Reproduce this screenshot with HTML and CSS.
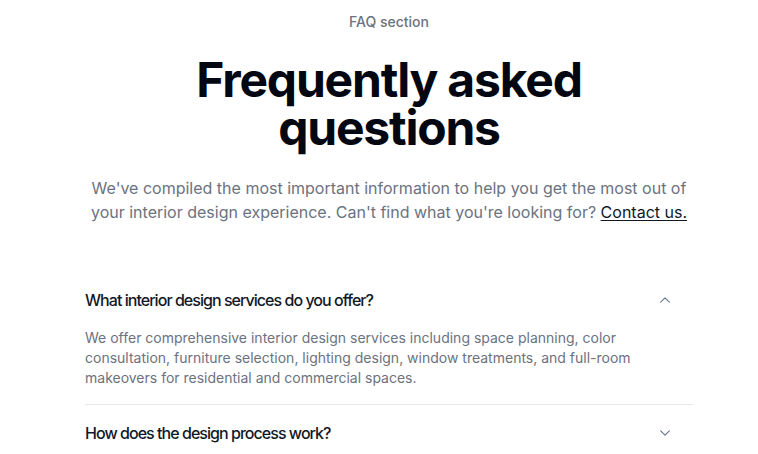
FILE: index.html
```html
<!DOCTYPE html>
<html lang="en">
<head>
<meta charset="utf-8">
<title>FAQ</title>
<link rel="stylesheet" href="styles.css">
</head>
<body>
<main class="page">
  <section class="faq">
    <header class="intro">
      <p class="eyebrow">FAQ section</p>
      <h1 class="title">Frequently asked questions</h1>
      <p class="lead">We've compiled the most important information to help you get the most out of your interior design experience. Can't find what you're looking for? <a class="link" href="#">Contact us.</a></p>
    </header>
    <dl class="list">
      <div class="item">
        <dt class="question">
          <span class="q-text">What interior design services do you offer?</span>
          <svg class="chev" viewBox="0 0 24 24" fill="none" stroke="currentColor" stroke-width="1.8" stroke-linecap="round" stroke-linejoin="round"><path d="M4.5 15.75l7.5-7.5 7.5 7.5"/></svg>
        </dt>
        <dd class="answer">We offer comprehensive interior design services including space planning, color consultation, furniture selection, lighting design, window treatments, and full-room makeovers for residential and commercial spaces.</dd>
      </div>
      <div class="item">
        <dt class="question">
          <span class="q-text">How does the design process work?</span>
          <svg class="chev" viewBox="0 0 24 24" fill="none" stroke="currentColor" stroke-width="1.8" stroke-linecap="round" stroke-linejoin="round"><path d="M19.5 8.25l-7.5 7.5-7.5-7.5"/></svg>
        </dt>
      </div>
    </dl>
  </section>
</main>
</body>
</html>
```
FILE: styles.css
```css
* { box-sizing: border-box; }
html, body { margin: 0; padding: 0; background: #ffffff; }
body {
  font-family: Inter, "Noto Sans", sans-serif;
  color: #111827;
  overflow: hidden;
}
.page {
  padding: 12px 0 0 20px;
}
.faq {
  max-width: 608px;
  margin: 0 auto;
}
.intro { text-align: center; }
.eyebrow {
  margin: 0;
  font-size: 14px;
  line-height: 20px;
  font-weight: 500;
  color: #6b7280;
}
.title {
  margin: 24px 0 0;
  font-size: 48px;
  line-height: 48px;
  font-weight: 700;
  letter-spacing: -0.025em;
  color: #030712;
}
.lead {
  margin: 24px 0 0;
  font-size: 16px;
  line-height: 24px;
  color: #6b7280;
}
.link {
  color: #111827;
  text-decoration: underline;
  text-underline-offset: 2px;
}
.list {
  margin: 48px 0 0;
  padding: 0;
}
.item {
  padding: 16px 0;
  border-top: 1px solid #e5e7eb;
}
.item:first-child { border-top: 0; }
.question {
  display: flex;
  align-items: center;
  justify-content: space-between;
  padding-right: 21px;
  font-size: 16px;
  line-height: 24px;
  font-weight: 500;
  letter-spacing: -0.06em;
  color: #111827;
}
.chev {
  width: 14px;
  height: 14px;
  color: #64748b;
}
.answer {
  margin: 16px 0 0;
  padding-right: 48px;
  font-size: 14px;
  line-height: 20px;
  color: #6b7280;
}
```
